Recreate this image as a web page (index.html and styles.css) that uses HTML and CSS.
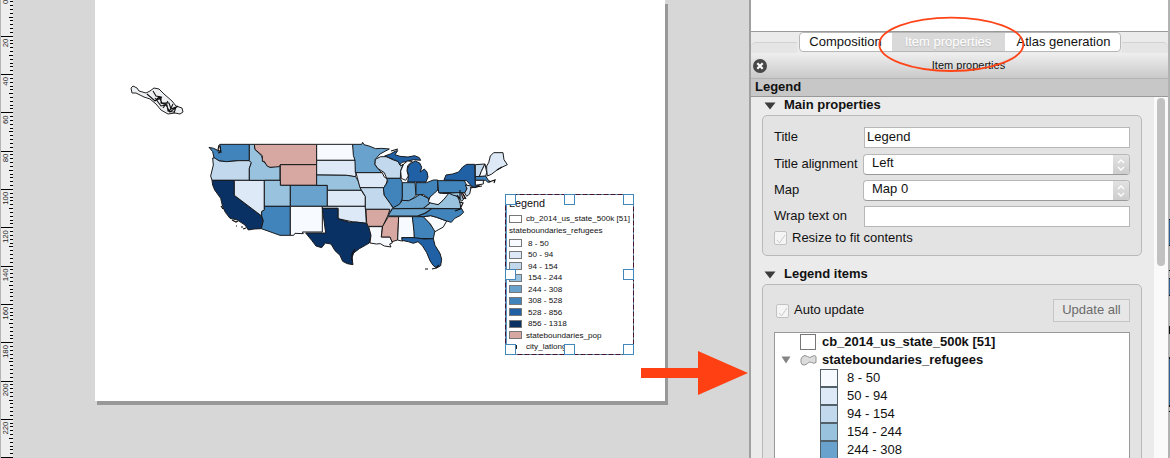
FILE: index.html
```html
<!DOCTYPE html>
<html lang="en">
<head>
<meta charset="utf-8">
<title>Print Composer</title>
<link rel="stylesheet" href="styles.css">
</head>
<body>
<div class="app">
  <svg class="ruler" width="13" height="458" viewBox="0 0 13 458">
    <path d="M0 0h1v458H0z" fill="#b4b4b4"/>
    <g id="ticks"></g>
  </svg>
  <main class="canvas">
    <div class="page">
      <svg class="map" width="570" height="401" viewBox="95 0 570 401">
        <g class="alaska">
          <path d="M131 88l2-2 4 2 2 3 7 2 4-2 4-3 5 1 5 5 8 7 4 5 6 2 1 4-3 2-5-1-7 1-7-4-5-6-6-5-6-2-8-4-4 0z"/>
          <path class="islets" d="M147 94l8 7 4-4 3 6 7 0 2 6 5-2-2 6M153 91l3 5 5 1 0 6 6 2 1 6 6 1M155 98l6 8 5-1 4 7 8-6M157 100l5-3M163 108l5-7M169 112l4-8"/>
        </g>
        <g class="states" transform="translate(200 130) scale(.33333)">
          <path class="c6" d="M27 52l14 3 12 6 4 9 5-9-3-18h89v49l-32 0-36 3-22-2-16-9-4-19z"/>
          <path class="c3" d="M38 84l6 0 14 9 22 2 36-3h32l6 6-6 17v36H36l-4-13 8-33z"/>
          <path class="c8" d="M36 151h67v45l82 62 5 14-6 24-22 1-17 3-10-15-23-15-22-5-14-18-8-17-6-25-18-25-6-15z"/>
          <path class="c2" d="M103 151h90v89l-8 5v13l-82-62z"/>
          <path class="c4" d="M148 43h15l2 15 20 20 5 17 20 17 30-5v44h-92v-36l6-17-6-6z"/>
          <path class="pop" d="M163 43h187v61H241l-3 6-28 2-9-4-8-14h-6l0-17-22-19z"/>
          <path class="pop" d="M241 104h109v62H241z"/>
          <path class="c4" d="M193 151h48v15h30v63h-78z"/>
          <path class="c5" d="M271 166h111v63H271z"/>
          <path class="c6" d="M193 229h78v87h-31l-56-20 6-24-5-14v-13l8-5z"/>
          <path class="c1" d="M271 229h96v77h-60l3 5-25-1-4 6h-10z"/>
          <path class="c1" d="M350 43h108l3 20 5 28H350z"/>
          <path class="c2" d="M350 91h116l2 47-6 2-22-4-90-1z"/>
          <path class="c4" d="M350 135l90 1 27 4 8 14 9 27H382v-15h-32z"/>
          <path class="c2" d="M382 181h102l6 10 6 8v30H382z"/>
          <path class="c2" d="M367 229h129l3 51-39-4-46-10v-31h-47z"/>
          <path class="c8" d="M367 235h47v31l15 5 20 6 20-1 30 4 9 10 5 25-5 24-12 7-18 10-17 13-5 14 3 21-17-3-14-7-8-18-15-14-12-20-17-3-11 14-17-5-13-17-18-22h60z"/>
          <g transform="translate(420 0)">
            <path class="c5" d="M38 43h27l3-6 4 7 15 4 20 8 17-1 24 2-28 15-14 16-1 17 20 23H46l-1-37-5-15z"/>
            <path class="c2" d="M48 128h79l5 12 11 8-5 15-8 12-70-2-8-30z"/>
            <path class="c3" d="M106 88l16-8 18 0 20 10 15 4 7 14 7-5-7 19-1 23h-41l-7-17-20-13-8-12z"/>
            <path class="c7" d="M134 78l17-6 16-9 6-1-8 12 15 5 24 2 20-4 14 6 4 8-22-2-18 5-16 3-7 8-4-10-15-7z"/>
            <path class="c7" d="M203 156l3-20-5-15 6-16 9-7 10-5 14 7 5 12-4 14 12-9 8 9 3 15-6 15z"/>
            <path class="c1" d="M184 145l-2-22 9-21 12-9 14 1-14 13-2 15 4 16-8 13z"/>
            <path class="c6" d="M140 145h41l6 13v47l-9 20-18 8-10-13-18-25-2-20 8-12 5-8z"/>
            <path class="c3" d="M60 173h70l2 22 18 25 8 13-8 15-2-10H76l0-39z"/>
            <path class="pop" d="M78 238h72l-7 20-15 31H84l-4-11z"/>
            <path class="c1" d="M86 290h41l-3 31h27l6 18-8 3 4 9-20-3-12-7-12 1-19-3 3-23z"/>
            <path class="pop" d="M145 260h31l-3 70-17 5-6-14h-26l4-32z"/>
            <path class="c1" d="M176 260h42l5 45v18h-38l4 10-9-1-7-2z"/>
            <path class="c6" d="M217 260h33l20 22 15 20-5 24-57-1-1-20z"/>
            <path class="c7" d="M186 323h37l29 4 28-1 5 20 15 24 5 18-3 19-12 7-11-8-9-14-10-24-13-21-13-12-14 5-15-5-19-4z"/>
            <path class="c1" d="M250 260l22-3 18 5 30 11-10 18-25 14-14-23z"/>
            <path class="c6" d="M232 258l25-8 18-14h90l6 11-11 10-16 8-10 12-14-4-30-11-18-5-22 3z"/>
            <path class="c5" d="M158 236h117l-22 14-21 8h-87l5-10z"/>
            <path class="c5" d="M160 233l18-10 10-13 17 2 20-9 15-10 25 12 4 15-19 15-90 1z"/>
            <path class="c5" d="M187 158h38l3 38-7 8-15 8-20-1 1-10z"/>
            <path class="c6" d="M228 158l20 0 12 0 20-8 13 0v30l-12 15-16 10-15-12-22 2z"/>
            <path class="c1" d="M293 180l6 10 33-2-11 12-13 13-13 10-15 2-15-10 5-14 14-12z"/>
            <path class="c4" d="M250 235l21-16 24 5 16-15 16-20 25 10 8 17 2 17 3 3z"/>
            <path class="c4" d="M308 190l56-3 10 17-9 10-13-15-14-4-10-5z"/>
            <path class="pop" d="M364 190l5 0 7 14-7 2z"/>
            <path class="c6" d="M293 152h80l8 15-3 21h-82z"/>
            <path class="c7" d="M312 150l6-15 20-3 18-6 12-15 12-8 24 0 2 60 13 5-15 5-12-7-12-14z"/>
            <path class="c3" d="M376 165l18 3-5 24-9 7-6-10 7-13z"/>
            <path class="c3" d="M406 104l29-2-9 18-8 20h-12z"/>
            <path class="c1" d="M435 102l5 25-3 12-19 1 6-16z"/>
            <path class="c6" d="M406 140l31-2 8 13 7 4-8 2-7-6h-31z"/>
            <path class="c1" d="M406 151h24v11l-24 4z"/>
            <path class="c2" d="M440 108l6-10 5-20 10-10 28 0 3 21 10 15-27 13-21 16-12 5-2-19z"/>
          </g>
        </g>
        <path class="coast" d="M219 145l-1 5 3 2M220 146l1 7M232 220l4 2 2-1M236 226l1 0M241 227l2 0M243 229l3-1M221 206l2 3M352 261l0-7 3-5M425 269l3 0M432 269l4-1 3-3M398 149l-7 2M455 211l5-2 3-6-4-1M489 182l6-2-1 3M470 188l12-2M497 170l5-3M460 190l0 9-3-4M463 194l3 5"/>
      </svg>
      <section class="map-legend">
        <h2>Legend</h2>
        <div class="row layer"><i class="sw"></i><span>cb_2014_us_state_500k [51]</span></div>
        <div class="row group">stateboundaries_refugees</div>
        <div class="row"><i class="sw b1"></i><span>8 - 50</span></div>
        <div class="row"><i class="sw b2"></i><span>50 - 94</span></div>
        <div class="row"><i class="sw b3"></i><span>94 - 154</span></div>
        <div class="row"><i class="sw b4"></i><span>154 - 244</span></div>
        <div class="row"><i class="sw b5"></i><span>244 - 308</span></div>
        <div class="row"><i class="sw b6"></i><span>308 - 528</span></div>
        <div class="row"><i class="sw b7"></i><span>528 - 856</span></div>
        <div class="row"><i class="sw b8"></i><span>856 - 1318</span></div>
        <div class="row layer"><i class="sw bpop"></i><span>stateboundaries_pop</span></div>
        <div class="row layer"><i class="dot"></i><span>city_latlong</span></div>
        <svg class="selection" width="131" height="163" viewBox="504 193 131 163">
          <rect class="sel-base" x="505.500" y="194.500" width="128" height="160"/>
          <rect class="sel-dash" x="505.500" y="194.500" width="128" height="160"/>
          <path class="sel-left" d="M506.500 195v159"/>
          <g class="handles">
            <rect x="505.500" y="194.500" width="10" height="10"/><rect x="564.500" y="194.500" width="10" height="10"/><rect x="623.500" y="194.500" width="10" height="10"/>
            <rect x="505.500" y="269.500" width="10" height="10"/><rect x="623.500" y="269.500" width="10" height="10"/>
            <rect x="505.500" y="344.500" width="10" height="10"/><rect x="564.500" y="344.500" width="10" height="10"/><rect x="623.500" y="344.500" width="10" height="10"/>
          </g>
          <path class="marker" d="M516.500 345v4"/>
        </svg>
      </section>
    </div>
  </main>
  <aside class="panel">
    <div class="history"></div>
    <nav class="tabs">
      <span class="stub left"></span>
      <div class="tabset"><span class="tab t1">Composition</span><span class="tab active">Item properties</span><span class="tab t3">Atlas generation</span></div>
      <span class="stub right"></span>
    </nav>
    <header class="dock">
      <svg width="14" height="14" viewBox="0 0 14 14"><circle cx="7" cy="7" r="7" fill="#484848"/><path d="M4.300 4.300l5.400 5.400M9.700 4.300l-5.400 5.400" stroke="#fff" stroke-width="2.200"/></svg>
      <span>Item properties</span>
    </header>
    <div class="item-name">Legend</div>
    <div class="scroll">
      <div class="content">
        <h3><svg width="12" height="8" viewBox="0 0 12 8"><path d="M.500 .500h11L6 7.500z" fill="#3b3b3b"/></svg><span>Main properties</span></h3>
        <div class="box main">
          <div class="field text"><label>Title</label><div class="input">Legend</div></div>
          <div class="field"><label>Title alignment</label><div class="combo"><span>Left</span><b><svg width="8" height="12" viewBox="0 0 8 12"><path d="M1 4l3-3 3 3M1 8l3 3 3-3"/></svg></b></div></div>
          <div class="field"><label>Map</label><div class="combo"><span>Map 0</span><b><svg width="8" height="12" viewBox="0 0 8 12"><path d="M1 4l3-3 3 3M1 8l3 3 3-3"/></svg></b></div></div>
          <div class="field wrap text"><label>Wrap text on</label><div class="input"></div></div>
          <div class="check"><i><svg width="10" height="10" viewBox="0 0 10 10"><path d="M1 6l2.500 3L9 1"/></svg></i><span>Resize to fit contents</span></div>
        </div>
        <h3 class="second"><svg width="12" height="8" viewBox="0 0 12 8"><path d="M.500 .500h11L6 7.500z" fill="#3b3b3b"/></svg><span>Legend items</span></h3>
        <div class="box items">
          <div class="toolbar"><div class="check"><i><svg width="10" height="10" viewBox="0 0 10 10"><path d="M1 6l2.500 3L9 1"/></svg></i><span>Auto update</span></div><div class="button">Update all</div></div>
          <div class="tree">
            <div class="node bold"><i class="chip"></i><span>cb_2014_us_state_500k [51]</span></div>
            <div class="node bold parent">
              <svg class="expander" width="10" height="8" viewBox="0 0 10 8"><path d="M.500 .500h9L5 7.500z" fill="#858585"/></svg>
              <svg class="poly" width="17" height="13" viewBox="0 0 17 13"><path d="M2.500 2.500Q5 .500 7.500 2.500T12 2.500Q15 .500 16 2.500V8.500Q14 10 11.500 8.500 9 7 7.500 9.500 5 12 2 10.500.500 9 1 5z" fill="#dcdcdc" stroke="#929292"/></svg>
              <span>stateboundaries_refugees</span></div>
            <div class="node leaf"><i class="b1"></i><span>8 - 50</span></div>
            <div class="node leaf"><i class="b2"></i><span>50 - 94</span></div>
            <div class="node leaf"><i class="b3"></i><span>94 - 154</span></div>
            <div class="node leaf"><i class="b4"></i><span>154 - 244</span></div>
            <div class="node leaf"><i class="b5"></i><span>244 - 308</span></div>
          </div>
        </div>
      </div>
      <div class="scrollbar"><div class="thumb"></div></div>
    </div>
  </aside>
  <svg class="edge" width="2" height="458" viewBox="0 0 2 458"><path fill="#b2b2b2" d="M0 0h2v458H0z"/><path fill="#2c6292" d="M1 219h1v27H1zM1 279h1v17H1zM1 357h1v50H1z"/><path fill="#111" d="M1 219h1v1H1zM1 245h1v1H1zM1 270h1v1H1zM1 278h1v1H1zM1 295h1v1H1zM1 326h1v8H1zM1 357h1v2H1zM1 405h1v2H1zM1 411h1v1H1z"/></svg>
</div>
<svg class="annotations" width="1170" height="458" viewBox="0 0 1170 458">
  <ellipse cx="951.300" cy="44.300" rx="72" ry="26.700"/>
  <path d="M641 368h57v-17l50 22-50 22v-17h-57z"/>
</svg>
<script src="ruler.js"></script>
</body>
</html>
```

FILE: styles.css
```css
* { box-sizing: border-box; }
body { margin: 0; width: 1170px; height: 458px; overflow: hidden; background: #d7d7d7; color: #111; font: 13px "Liberation Sans", Arial, sans-serif; }
.app { display: flex; width: 1170px; height: 458px; overflow: hidden; }
svg { display: block; flex: none; }
i { display: block; flex: none; font-style: normal; }

.ruler { background: #eee; }
.ruler text { font-size: 7.8px; fill: #222; text-anchor: middle; }
.canvas { width: 736px; height: 458px; padding-left: 82px; background: #d7d7d7; }
.page { position: relative; width: 570px; height: 401px; background: #fff; box-shadow: 2px 4px 0 #989898, 3px 4px 0 #989898; }

.states path { stroke: #18191c; stroke-width: 3; stroke-linejoin: round; }
.alaska path { fill: #eef1f4; stroke: #222; stroke-width: 1; }
.alaska .islets { fill: none; stroke: #111; stroke-width: 1.1; }
.coast { fill: none; stroke: #111; stroke-width: 1.2; }
.c1 { fill: #f7fbff; } .c2 { fill: #dde9f6; } .c3 { fill: #c2d8ed; } .c4 { fill: #98c2dd; }
.c5 { fill: #69a3cd; } .c6 { fill: #4184bb; } .c7 { fill: #2060a4; } .c8 { fill: #0a3164; }
.pop { fill: #d7a7a1; }
.b1 { background: #f7fbff; } .b2 { background: #dde9f6; } .b3 { background: #c2d8ed; } .b4 { background: #98c2dd; }
.b5 { background: #69a3cd; } .b6 { background: #4184bb; } .b7 { background: #2060a4; } .b8 { background: #0a3164; }
.bpop { background: #d7a7a1; }

.map-legend { position: absolute; left: 410px; top: 194px; width: 129px; height: 161px; background: #fff; font-size: 8.1px; line-height: 11.5px; white-space: nowrap; }
.map-legend h2 { margin: 0; padding: 3px 0 0 4px; font-size: 10.8px; line-height: 13px; font-weight: 400; height: 19px; }
.map-legend .row { display: flex; align-items: center; gap: 6px; height: 11.5px; padding-left: 4px; }
.map-legend .layer { gap: 4px; }
.map-legend .group { height: 13px; }
.sw { width: 13px; height: 8px; border: 1px solid #777; }
.dot { width: 13px; height: 4px; }
.selection { position: absolute; left: -1px; top: -1px; }
.selection rect, .selection path { fill: none; }
.sel-base { stroke: #5d93bb; }
.sel-dash { stroke: #4b1530; stroke-dasharray: 5 2; }
.sel-left { stroke: #5795c5; }
.marker { stroke: #222; }
.selection .handles rect { fill: #fff; stroke: #4288bb; }

.panel { display: flex; flex-direction: column; width: 419px; height: 458px; border-left: 2px solid #a0a0a0; background: #ebebeb; }
.history { height: 32px; border-bottom: 1px solid #999; background: #fff; }
.tabs { display: flex; height: 21px; justify-content: space-between; }
.stub { height: 11px; margin-top: 10px; border-top: 1px solid #d2d2d2; background: #e5e5e5; }
.left { width: 46px; border-radius: 5px 0 0; }
.right { width: 46px; border-radius: 0 5px 0 0; }
.tabset { display: flex; width: 322px; height: 20px; border: 1px solid #b7b7b7; border-radius: 4px; overflow: hidden; background: #fff; }
.tab { line-height: 18px; text-align: center; white-space: nowrap; }
.t1 { width: 92px; }
.active { width: 113px; background: #d9d9d9; color: #fff; text-shadow: 0 1px 1px #bbb; }
.t3 { width: 115px; padding-left: 3px; }
.dock { display: flex; align-items: center; height: 26px; padding-left: 2px; border-bottom: 1px solid #b3b3b3; background: linear-gradient(#efefef, #c9c9c9); font-size: 11px; }
.dock span { flex: 1; padding: 0 0 2px 2px; text-align: center; }
.item-name { height: 18px; padding-left: 4px; border-bottom: 1px solid #999; background: #c7c7c7; font-weight: 700; line-height: 16px; }
.scroll { display: flex; height: 361px; overflow: hidden; }
.content { width: 403px; padding: 0 12px 0 11px; }
.scrollbar { width: 14px; padding: 1px 3px; background: #fafafa; }
.thumb { width: 8px; height: 168px; border-radius: 4px; background: #c1c1c1; }
h3 { display: flex; align-items: center; gap: 8px; height: 18px; margin: 0; padding: 0 0 2px 2px; font-size: 13px; line-height: 16px; font-weight: 700; }
h3 svg { margin-top: 2px; }
h3.second { height: 28px; padding: 9px 0 1px 2px; }
.box { width: 380px; border: 1px solid #b9b9b9; border-radius: 5px; background: #e3e3e3; }
.main { height: 141px; padding: 11px 11px 0; }
.field { display: flex; justify-content: space-between; height: 26px; }
.field.text { height: 27px; }
.field.wrap { height: 25px; }
.field label { line-height: 19px; white-space: nowrap; letter-spacing: -.04px; }
.input { width: 266px; height: 21px; padding-left: 2px; border: 1px solid #b7b7b7; background: #fff; line-height: 18px; }
.combo { display: flex; width: 267px; height: 21px; border: 1px solid #b7b7b7; border-bottom-color: #999; border-radius: 4px; overflow: hidden; background: #fff; }
.combo span { flex: 1; padding-left: 8px; line-height: 16px; }
.combo b { width: 16px; padding: 4px; background: linear-gradient(#e2e2e2, #cdcdcd); }
.combo path { fill: none; stroke: #fff; stroke-width: 1.4; }
.check { display: flex; gap: 5px; line-height: 13px; }
.check i { width: 13px; height: 14px; padding: 2px 1px; border: 1px solid #c2c2c2; border-radius: 2px; background: #f5f5f5; }
.check path { fill: none; stroke: #ccc; }
.items { height: 230px; padding: 14px 11px 0; }
.toolbar { display: flex; justify-content: space-between; height: 33px; }
.toolbar .check { padding: 5px 0 0 2px; line-height: 12px; }
.button { width: 77px; height: 23px; border: 1px solid #c5c5c5; background: #e7e7e7; color: #6b6b6b; text-align: center; line-height: 20px; }
.tree { width: 356px; height: 180px; border: 1px solid #999; background: #fff; }
.node { display: flex; align-items: center; height: 18px; white-space: nowrap; }
.node span { line-height: 15px; padding-bottom: 1px; }
.bold { font-weight: 700; padding-left: 25px; gap: 6px; letter-spacing: -.03px; }
.chip { width: 16px; height: 16px; border: 1px solid #777; }
.parent { padding-left: 6px; gap: 0; }
.expander { margin-right: 9px; }
.poly { margin-right: 5px; }
.leaf { padding-left: 45px; gap: 9px; }
.leaf i { width: 18px; height: 18px; border: 1px solid #52606a; }

.annotations { position: absolute; left: 0; top: 0; pointer-events: none; }
.annotations ellipse { fill: none; stroke: #ff4417; stroke-width: 1.8; }
.annotations path { fill: #ff4013; }
```

FILE: ruler.js
```javascript
// Vertical ruler: one tick every 2 mm, a labelled line every 20 mm.
const ns = 'http://www.w3.org/2000/svg';
const ticks = document.getElementById('ticks');
const step = 38.31;
for (let i = 0; i <= 12; i++) {
  const base = -2.1 + i * step;
  for (let j = 0; j < 10; j++) {
    const y = Math.floor(base + j * step / 10);
    const x = j === 0 ? 1 : j === 5 ? 9 : 10;
    const r = document.createElementNS(ns, 'rect');
    r.setAttribute('x', x);
    r.setAttribute('y', y);
    r.setAttribute('width', 13 - x);
    r.setAttribute('height', 1);
    ticks.appendChild(r);
  }
  if (i === 12) break;
  const t = document.createElementNS(ns, 'text');
  const cy = base + (i === 0 ? 4 : i < 5 ? 6.8 : 8.8);
  t.setAttribute('transform', `translate(8 ${cy}) rotate(-90)`);
  t.textContent = i * 20;
  ticks.appendChild(t);
}
```
